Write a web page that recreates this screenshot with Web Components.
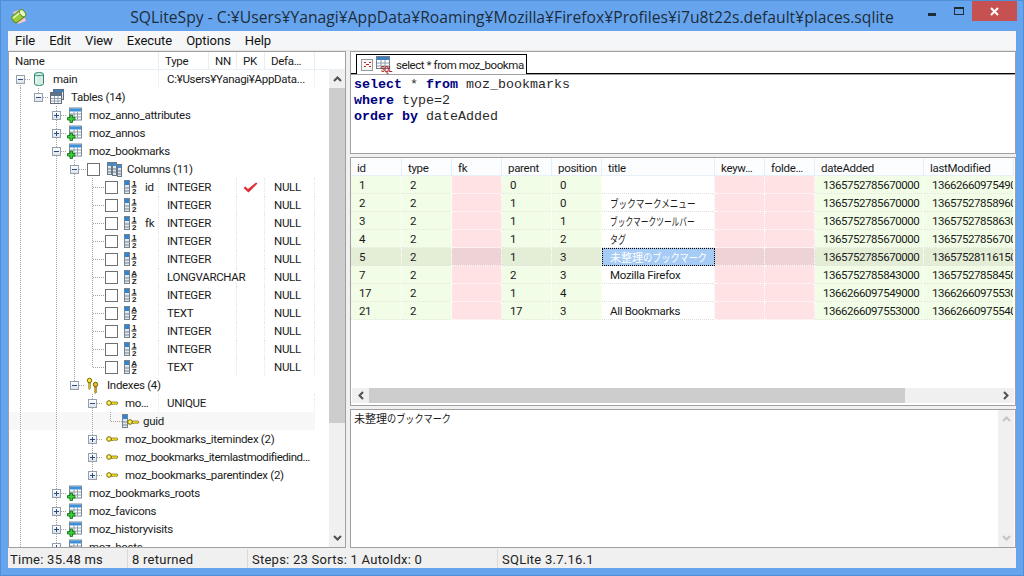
<!DOCTYPE html>
<html lang="ja"><head><meta charset="utf-8"><title>SQLiteSpy</title>
<style>
html,body{margin:0;padding:0;background:#66a5ee;overflow:hidden}
body{width:1024px;height:576px;font:11.5px Roboto,"Noto Sans CJK JP",sans-serif;letter-spacing:-.3px;color:#1a1a1a}
</style></head><body>
<app-window>
  <title-bar slot="title">SQLiteSpy - C:¥Users¥Yanagi¥AppData¥Roaming¥Mozilla¥Firefox¥Profiles¥i7u8t22s.default¥places.sqlite</title-bar>
  <menu-bar slot="menu"></menu-bar>
  <tree-pane slot="left"></tree-pane>
  <query-tabs slot="tabs">select * from moz_bookma</query-tabs>
  <sql-editor slot="editor"></sql-editor>
  <result-grid slot="grid"></result-grid>
  <cell-text slot="text">未整理<span style="display:inline-block;transform:scaleX(.83);transform-origin:0 50%">のブックマーク</span></cell-text>
  <status-bar slot="status"></status-bar>
</app-window>
<script>
const col='<rect x=".5" y="1.5" width="5" height="13" fill="#e4e8ec" stroke="#75838f"/><rect x="1" y="2" width="4" height="4" fill="#2f86d6"/><path d="M1 9h4M1 12h4" stroke="#75838f"/>';
const frac=(a,b)=>col+`<text x="10" y="7" font-family="Liberation Sans" font-size="8" font-weight="bold" text-anchor="middle" fill="#222">${a}</text><path d="M7.5 8h5" stroke="#222"/><text x="10" y="15" font-family="Liberation Sans" font-size="8" font-weight="bold" text-anchor="middle" fill="#222">${b}</text>`;
const keyH=(x,y)=>`<g transform="translate(${x} ${y})"><circle cx="3" cy="3" r="2.3" fill="#ffea30" stroke="#7a6c00" stroke-width="1"/><circle cx="3" cy="3" r=".8" fill="#fff"/><path d="M5.5 2h5.5l1 1-1 1.500-1-.7-1 .7-1-.7-1 .7H5.500z" fill="#ffea30" stroke="#6a5e00" stroke-width=".7"/></g>`;
const keyV=(x,y,f)=>`<g transform="translate(${x} ${y})"><circle cx="2.500" cy="2.500" r="2.200" fill="${f}" stroke="#6f6300"/><path d="M1.800 5h1.500v5.500l-1 1-.5-1z" fill="${f}" stroke="#6f6300" stroke-width=".7"/></g>`;
const tableBase='<g transform="translate(0 .5)"><rect x="2.500" y=".5" width="12" height="12" fill="#fff" stroke="#7b8a98"/><rect x="3" y="1" width="11" height="3" fill="#3d90dc"/><path d="M3 6.500h11M3 9.500h11M7 4v8M10.500 4v8" stroke="#8f9caa"/></g>';
const ICONS={
 db:'<rect x="3.500" y="1.500" width="9" height="13" rx="4" ry="2" fill="#d6ebe6" stroke="#2b8a6c"/><path d="M3.500 3.500c1 1.500 8 1.500 9 0" fill="none" stroke="#2b8a6c"/><path d="M5 6v6" stroke="#fff"/>',
 tables:'<rect x="4.500" y=".5" width="10" height="10" fill="#dfe4ea" stroke="#5f6d7b"/><rect x="5" y="1" width="9" height="2" fill="#3d7fc0"/><rect x="1.500" y="3.500" width="11" height="11" fill="#fff" stroke="#5f6d7b"/><rect x="2" y="4" width="10" height="3" fill="#5f7488"/><path d="M2 9.500h10M2 12h10M5.500 7v7M9 7v7" stroke="#8f9caa"/>',
 tableplus:tableBase+'<path d="M3 8h2.500v2.500H8V13H5.500v2.500H3V13H.5v-2.500H3z" fill="#3ccf3c" stroke="#0b6b0b" stroke-width=".8"/>',
 columns:'<rect x="1.500" y="1.500" width="4" height="12" fill="#dfe6ec" stroke="#6b7987"/><rect x="6.500" y="1.500" width="4" height="13" fill="#dfe6ec" stroke="#6b7987"/><rect x="11.500" y="3.500" width="4" height="12" fill="#dfe6ec" stroke="#6b7987"/><rect x="2" y="2" width="3" height="3" fill="#3d90dc"/><rect x="7" y="2" width="3" height="3" fill="#3d90dc"/><rect x="12" y="4" width="3" height="3" fill="#3d90dc"/><path d="M2 8h3M2 11h3M7 8h3M7 11h3M12 10h3M12 13h3" stroke="#6b7987"/>',
 num:frac('1','2'), az:frac('A','Z'),
 indexes:keyV(2,1,'#ffea30')+keyV(8,5,'#f2b92c'),
 key:keyH(3,5),
 colkey:col+keyH(5,6),
 sql:'<rect x=".5" y=".5" width="13" height="12" fill="#fff" stroke="#6f7f8f"/><rect x="1" y="1" width="12" height="3" fill="#3d7fc0"/><path d="M1 7h12M1 10h12M5 4v8M9 4v8" stroke="#8f9caa"/><text transform="translate(5 15.500) scale(.6 1)" font-family="Liberation Sans" font-size="9.500" font-weight="bold" fill="#a81818">SQL</text>'
};
function def(name,css,html){
 const C=class extends HTMLElement{
  constructor(){super();this.attachShadow({mode:'open'}).innerHTML=`<style>${css}</style>${typeof html==='function'?'':html}`;}
  connectedCallback(){if(typeof html==='function'&&!this._d){this._d=1;const d=document.createElement('div');d.style.display='contents';d.innerHTML=html(this);this.shadowRoot.append(d);}}
 };
 customElements.define(name,C);
}
def('tree-icon',`:host{display:inline-flex;flex:none;width:16px;height:16px}svg{display:block;overflow:visible}`,
 h=>`<svg width="16" height="16" viewBox="0 0 16 16">${ICONS[h.getAttribute('name')]}</svg>`);

def('app-window',`:host{display:flex;flex-direction:column;width:1024px;height:576px;box-sizing:border-box;border:1px solid #4f8fd8;border-top-color:#4f8fd8}
 main{flex:1;display:flex;flex-direction:column;margin:0 7px 7px;background:#f0f0f0;min-height:0}
 .panes{display:flex;height:497px;gap:4px}
 .right{flex:1;min-width:0;display:flex;flex-direction:column}
 ::slotted([slot=grid]){margin:3px 0}`,
 `<slot name="title"></slot><main><slot name="menu"></slot>
 <div class="panes"><slot name="left"></slot><div class="right"><slot name="tabs"></slot><slot name="editor"></slot><slot name="grid"></slot><slot name="text"></slot></div></div>
 <slot name="status"></slot></main>`);

def('title-bar',`:host{display:grid;grid-template-columns:1fr auto 1fr;height:30px;align-items:start;color:#1e2c3a;font:15.7px "Open Sans",sans-serif;letter-spacing:0}
 .ic{margin:6px 0 0 9px;width:18px;height:18px}
 .t{line-height:33px;white-space:nowrap}
 .c{display:flex;justify-content:flex-end;margin-right:6px}
 .b{width:26px;height:20px;display:flex;align-items:flex-start;justify-content:center}
 .x{width:45px;background:#c75050;align-items:center}`,
 `<svg class="ic" viewBox="0 0 18 18"><path d="M3 5l9-3 4 12-8 3z" fill="#f4c6d0"/><g transform="rotate(-38 9 9)"><rect x="1.500" y="5" width="14" height="8" rx="3" fill="#9ccb3c" stroke="#5f8f1e"/><ellipse cx="13.500" cy="9" rx="2.500" ry="4" fill="#e8f6c8" stroke="#5f8f1e"/><path d="M3 7h8" stroke="#e4f5b8" stroke-width="1.500"/></g></svg>
 <div class="t"><slot></slot></div>
 <div class="c"><div class="b"><svg width="8" height="3" style="margin-top:12px"><rect width="8" height="3" fill="#1e2c3a"/></svg></div><div class="b" style="width:27px"><svg width="10" height="8" style="margin-top:6px"><rect x=".5" y="1" width="9" height="6.500" fill="none" stroke="#1e2c3a"/><rect width="10" height="2" fill="#1e2c3a"/></svg></div><div class="b x"><svg width="9" height="9"><path d="M1 1l7 7M8 1L1 8" stroke="#fff" stroke-width="2"/></svg></div></div>`);

def('menu-bar',`:host{display:flex;height:19px;padding-left:0;background:#f5f6f7;border-bottom:1px solid #e4e4e4;font-size:13px;letter-spacing:-.06px;color:#111;box-sizing:content-box}
 span{padding:0 7px;line-height:19px}`,
 `<span>File</span><span>Edit</span><span>View</span><span>Execute</span><span>Options</span><span>Help</span>`);

/* Tree */
def('tree-row',`:host{display:flex;height:18px;line-height:18px;white-space:nowrap;flex:none;width:320px}
 .name{display:flex;align-items:center;width:150px;flex:none;box-sizing:border-box;overflow:visible}
 .exp{width:9px;height:9px;box-sizing:border-box;border:1px solid #93a1af;background:linear-gradient(#fff,#dde3ea);flex:none;display:flex;align-items:center;justify-content:center}
 .exp i{display:block;width:5px;height:1px;background:#2c4a85}
 .cb{width:13px;height:13px;box-sizing:border-box;border:1px solid #707070;background:#fff;flex:none}
 .type{width:78px;flex:none;padding-left:8px;box-sizing:border-box;overflow:visible}
 .pk{width:28px;flex:none;display:flex;align-items:center;justify-content:center;box-sizing:border-box}
 .def{width:50px;flex:none;padding-left:9px;box-sizing:border-box}
 .sep{border-right:1px dotted #e6e6e6}`, h=>{
  const a=n=>h.getAttribute(n);
  const guides=(a('g')||'').split(',').filter(Boolean);
  const bg=[];
  const dotsV='repeating-linear-gradient(to bottom,#a3a3a3 0 1px,transparent 1px 2px)';
  const dotsH='repeating-linear-gradient(to right,#a3a3a3 0 1px,transparent 1px 2px)';
  for(const g of guides){const[x,m]=g.split(':');const px=(+x-9);
    if(m==='t')bg.push(`${dotsV} ${px}px 0/1px 9px no-repeat`);
    else if(m==='b')bg.push(`${dotsV} ${px}px 9px/1px 9px no-repeat`);
    else bg.push(`${dotsV} ${px}px 0/1px 100% no-repeat`);}
  const stubFrom=+a('sf'),stubW=+a('sw');
  if(stubW)bg.push(`${dotsH} ${stubFrom-9}px 9px/${stubW}px 1px no-repeat`);
  if(a('hl')!==null)bg.push('linear-gradient(#f7f7f7,#f7f7f7) 0 0/306px 100% no-repeat');
  h.style.background=bg.join(',');
  const e=a('e');
  const expand=e?`<div class="exp">${e==='+'?'<svg width="7" height="7" style="display:block"><path d="M1 3.500h5M3.500 1v5" stroke="#2c4a85"/></svg>':'<i></i>'}</div>`:'';
  const pad=+a('pl');
  const gapI=+a('gi'),gapT=+a('gt');
  const hasT=!!a('type'),hasD=!!a('def');
  const inner=`<div class="name ${hasT?'sep':''}" style="padding-left:${pad-9}px">${expand}${a('cb')!==null?`<div class="cb" style="margin-left:${+a('gc')}px"></div>`:''}<tree-icon name="${a('icon')}" style="margin-left:${gapI}px"></tree-icon><span style="margin-left:${gapT}px"><slot></slot></span></div>`;
  return inner+`<div class="type ${hasD?'sep':''}">${a('type')||''}</div><div class="pk ${hasD?'sep':''}">${a('pk')!==null?'<svg width="15" height="11" viewBox="0 0 15 11"><path d="M.5 6l2-1.500L5 7 13 .5l1.500 1L5.500 10.500z" fill="#e02b35"/></svg>':''}</div><div class="def ${hasT?'sep':''}">${a('def')||''}</div>`;
 });

const R=[];
const add=(attrs,txt)=>R.push(`<tree-row ${attrs}>${txt}</tree-row>`);
const node=(xc,g,icon,txt,e,extra='')=>add(`pl="${xc-4}" e="${e}" g="${g}" sf="${xc+5}" sw="5" icon="${icon}" gi="6" gt="6" ${extra}`,txt);
node(20,'20:b','db','main','-','type="C:¥Users¥Yanagi¥AppData..."');
node(38,'20,38:t','tables','Tables (14)','-');
const tb=t=>node(56,'20,56','tableplus',t,'+');
tb('moz_anno_attributes');tb('moz_annos');
node(56,'20,56','tableplus','moz_bookmarks','-');
add(`pl="70" e="-" g="20,56,74" sf="79" sw="8" cb gc="8" icon="columns" gi="6" gt="5"`,'Columns (11)');
[['id','INTEGER','num',1],['','INTEGER','num'],['fk','INTEGER','num'],['','INTEGER','num'],['','INTEGER','num'],['','LONGVARCHAR','az'],['','INTEGER','num'],['','TEXT','az'],['','INTEGER','num'],['','INTEGER','num'],['','TEXT','az']].forEach((c,i)=>{
 add(`pl="105" g="20,56,74,${i==10?'92:t':'92'}" sf="93" sw="11" cb icon="${c[2]}" gi="6" gt="5" type="${c[1]}" def="NULL" ${c[3]?'pk':''}`,c[0]);
});
node(74,'20,56,74:t','indexes','Indexes (4)','-');
node(92,'20,56,92','key','mo…','-','type="UNIQUE"');
add(`pl="122" g="20,56,92,110:t" sf="111" sw="12" icon="colkey" hl gi="0" gt="5"`,'guid');
const ix=(t,l,x='')=>node(92,l?'20,56,92:t':'20,56,92','key',t,'+',x);
ix('moz_bookmarks_itemindex (2)');ix('moz_bookmarks_itemlastmodifiedind…',0,'style="letter-spacing:-.45px"');ix('moz_bookmarks_parentindex (2)',1);
['moz_bookmarks_roots','moz_favicons','moz_historyvisits','moz_hosts'].forEach(tb);

def('v-scroll',`:host{display:flex;flex-direction:column;width:16px;flex:none;background:#f0f0f0}
 .a{height:18px;display:flex;align-items:center;justify-content:center;flex:none}
 .t{flex:none;background:#cdcdcd}.s{flex:1}
 :host([off]) path{stroke:#c4c4c4}`,
 h=>`<div class="a"><svg width="9" height="6"><path d="M1 5l3.500-3.500L8 5" fill="none" stroke="#505050" stroke-width="2"/></svg></div>
 ${h.getAttribute('thumb')?`<div class="t" style="height:${h.getAttribute('thumb')}px"></div>`:''}<div class="s"></div>
 <div class="a"><svg width="9" height="6"><path d="M1 1l3.500 3.500L8 1" fill="none" stroke="#505050" stroke-width="2"/></svg></div>`);

def('tree-pane',`:host{display:flex;flex-direction:column;width:338px;flex:none;box-sizing:border-box;border:1px solid #a0a0a0;background:#fff}
 header{display:flex;height:18px;line-height:19px;flex:none;background:#fff;box-sizing:border-box;border-bottom:1px solid #e8f0f8}
 header span{box-sizing:border-box;border-right:1px solid #e8eef5;padding-left:6px;flex:none}
 .b{flex:1;display:flex;min-height:0}
 .rows{width:320px;flex:none;overflow:hidden;display:flex;flex-direction:column}`,
 ()=>`<header><span style="width:150px">Name</span><span style="width:50px">Type</span><span style="width:28px">NN</span><span style="width:28px">PK</span><span style="width:50px">Defa…</span></header>
 <div class="b"><div class="rows">${R.join('')}</div><v-scroll thumb="335"></v-scroll></div>`);

def('query-tabs',`:host{display:flex;align-items:flex-end;height:23px;flex:none;box-sizing:border-box;border:1px solid #a0a0a0;border-bottom:0;background:#fff;padding-left:5px;box-shadow:inset 0 -1px 0 #000;letter-spacing:-.42px}
 .tab{display:flex;align-items:center;width:171px;height:20px;box-sizing:border-box;border:1px solid #000;border-bottom:0;background:#fff;padding-left:4px;white-space:nowrap;overflow:hidden}
 .x{width:12px;height:12px;box-sizing:border-box;border:1px solid #9a9a9a;background:#f6f6f6;flex:none;display:flex;align-items:center;justify-content:center}
 .s{margin:0 3px 0 3px;flex:none;display:block}`,
 `<div class="tab"><div class="x"><svg width="7" height="5"><path d="M0 0h2v1H0zM5 0h2v1H5zM2 2h3v1H2zM0 4h2v1H0zM5 4h2v1H5z" fill="#c42020"/></svg></div><svg class="s" width="17" height="17" viewBox="0 0 17 17" style="overflow:visible">${ICONS.sql}</svg><span><slot></slot></span></div>`);

def('sql-editor',`:host{display:block;height:80px;flex:none;box-sizing:border-box;border:1px solid #a0a0a0;background:#fff;padding:2px 3px;font:13.33px/16px "Liberation Mono",monospace;letter-spacing:0;color:#2a2a2a;white-space:pre}
 b{color:#000080}`,
 `<div><b>select</b> * <b>from</b> moz_bookmarks</div><div><b>where</b> type=2</div><div><b>order by</b> dateAdded</div>`);

const W=[51,50,50,50,50,113,50,50,109,90];
const H=['id','type','fk','parent','position','title','keyw…','folde…','dateAdded','lastModified'];
const fit=(t,s)=>`<span class="n" style="transform:scaleX(${s})">${t}</span>`;
const D=[['1','2','','0','0','','','','1365752785670000','1366266097549000'],
['2','2','','1','0',fit('ブックマークメニュー',.78),'','','1365752785670000','1365752785896000'],
['3','2','','1','1',fit('ブックマークツールバー',.7),'','','1365752785670000','1365752785863000'],
['4','2','','1','2',fit('タグ',.73),'','','1365752785670000','1365752785670000'],
['5','2','','1','3','未整理'+fit('のブックマーク',.83),'','','1365752785670000','1365752811615000'],
['7','2','','2','3','Mozilla Firefox','','','1365752785843000','1365752785845000'],
['17','2','','1','4','','','','1366266097549000','1366266097553000'],
['21','2','','17','3','All Bookmarks','','','1366266097553000','1366266097554000']];
const kinds=['g','g','p','g','g','w','p','p','g','g'];
def('result-grid',`:host{display:flex;flex-direction:column;height:249px;flex:none;box-sizing:border-box;border:1px solid #a0a0a0;background:#fff}
 .tb{flex:1;min-height:0;display:grid;grid-template-columns:${W.map(x=>x+'px').join(' ')};grid-auto-rows:18px;align-content:start;overflow:hidden}
 .h{padding-left:6px;line-height:21px;background:#fcfdfe;border-right:1px solid #e8eef5;border-bottom:1px solid #e8f0f8;box-sizing:border-box;white-space:nowrap;overflow:hidden}
 .c{padding-left:8px;line-height:18px;box-sizing:border-box;border-right:1px dotted #fff;border-bottom:1px dotted #e4e8e0;white-space:nowrap;overflow:hidden;letter-spacing:-.45px}
 .g{background:#f1fde6}.p{background:#fee2e4;border-bottom-color:#fff}.w{background:#fff;border-right-color:#eee;border-bottom-color:#ddd;letter-spacing:-.3px}
 .w.j{font:11px "Noto Sans CJK JP",sans-serif;line-height:18px;letter-spacing:0;overflow:visible}
 .n{display:inline-block;transform-origin:0 50%}
 .s.g{background:#e4edd6}.s.p{background:#edd3d6}
 .s.w{background:#a6ccf5;color:#fff;outline:1px dotted #000;outline-offset:-1px}
 .hb{display:flex;height:15px;flex:none;margin:0 1px 2px 1px;background:#f0f0f0}
 .a{width:17px;display:flex;align-items:center;justify-content:center;flex:none}
 .th{width:536px;background:#cdcdcd;flex:none}.tr{flex:1}`,
 `<div class="tb">${H.map(t=>`<div class="h">${t}</div>`).join('')}${D.map((r,i)=>r.map((v,j)=>`<div class="c ${kinds[j]} ${i==4?'s':''} ${j==5&&/[^\x00-\x7f]/.test(v)?'j':''}">${v}</div>`).join('')).join('')}</div>
 <div class="hb"><div class="a"><svg width="6" height="9"><path d="M5 1L1.500 4.500 5 8" fill="none" stroke="#505050" stroke-width="2"/></svg></div><div class="th"></div><div class="tr"></div><div class="a"><svg width="6" height="9"><path d="M1 1l3.500 3.500L1 8" fill="none" stroke="#505050" stroke-width="2"/></svg></div></div>`);

def('cell-text',`:host{display:flex;flex:1;min-height:0;box-sizing:border-box;border:1px solid #a0a0a0;background:#fff}
 .t{flex:1;padding:0 3px;font:11px/17px "Noto Sans CJK JP",sans-serif;letter-spacing:0;color:#1a1a1a}
 v-scroll{margin-right:1px}`,
 `<div class="t"><slot></slot></div><v-scroll off></v-scroll>`);

def('status-bar',`:host{display:grid;grid-template-columns:120px 120px 250px 1fr;height:20px;background:#f0f0f0;font-size:13px;letter-spacing:.25px;color:#222;box-sizing:border-box}
 span{padding-left:4px;border-right:1px solid #d9d9d9;margin:1px 0;line-height:21px;height:19px;white-space:nowrap}
 span:first-of-type{padding-left:2px}span:last-of-type{border:0}`,
 `<span>Time: 35.48 ms</span><span>8 returned</span><span>Steps: 23 Sorts: 1 AutoIdx: 0</span><span>SQLite 3.7.16.1</span>`);
</script>
</body></html>
